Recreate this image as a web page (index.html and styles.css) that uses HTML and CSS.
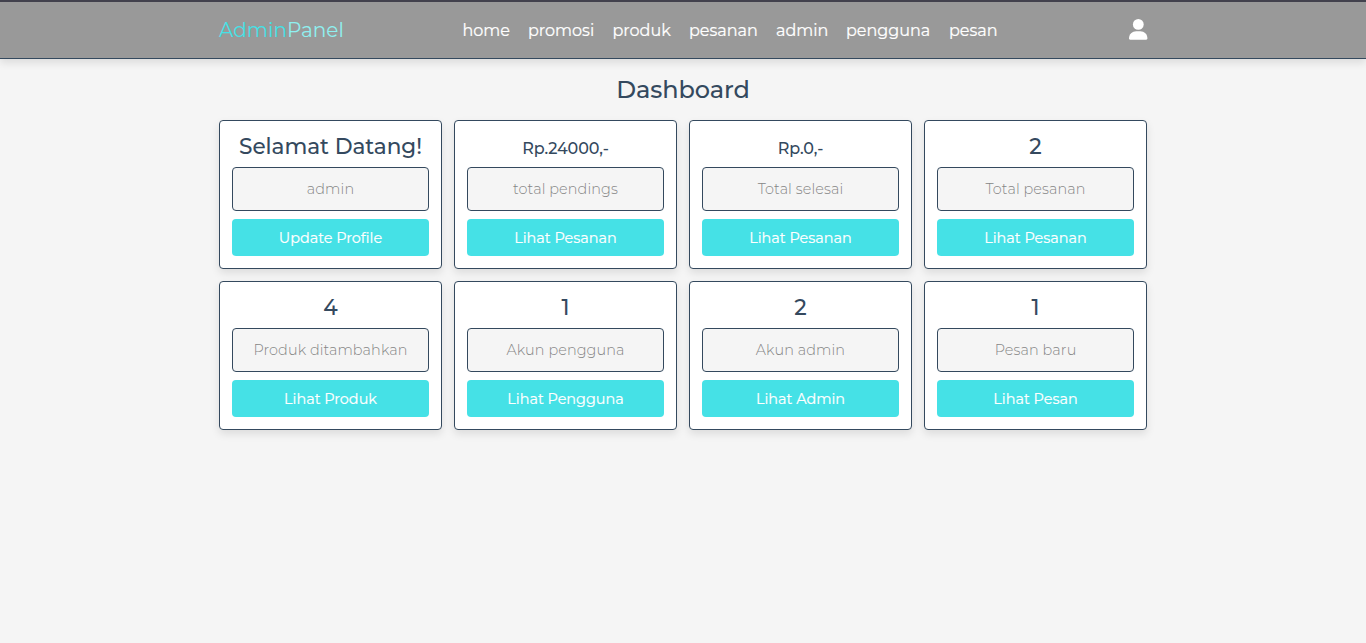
FILE: index.html
```html
<!DOCTYPE html>
<html lang="id">
<head>
<meta charset="utf-8">
<title>Dashboard</title>
<link rel="stylesheet" href="styles.css">
</head>
<body>
<header class="header">
  <div class="bar">
    <a class="logo">Admin<span>Panel</span></a>
    <nav class="navbar"><a>home</a><a>promosi</a><a>produk</a><a>pesanan</a><a>admin</a><a>pengguna</a><a>pesan</a></nav>
    <svg class="user" viewBox="0 0 18 21"><circle cx="9.3" cy="5.4" r="5.4"/><path d="M0 19.6C0 15 3.2 12.2 7.2 12.2h4.1c4 0 7.1 2.8 7.1 7.4 0 .7-.5 1.2-1.2 1.2H1.2C.5 20.800 0 20.300 0 19.600Z"/></svg>
  </div>
</header>
<main class="dashboard">
  <h1 class="heading">Dashboard</h1>
  <div class="grid">
    <section class="card"><h3>Selamat Datang!</h3><p>admin</p><a class="btn">Update Profile</a></section>
    <section class="card"><h3 class="money">Rp.24000,-</h3><p>total pendings</p><a class="btn">Lihat Pesanan</a></section>
    <section class="card"><h3 class="money">Rp.0,-</h3><p>Total selesai</p><a class="btn">Lihat Pesanan</a></section>
    <section class="card"><h3>2</h3><p>Total pesanan</p><a class="btn">Lihat Pesanan</a></section>
    <section class="card"><h3>4</h3><p>Produk ditambahkan</p><a class="btn">Lihat Produk</a></section>
    <section class="card"><h3>1</h3><p>Akun pengguna</p><a class="btn">Lihat Pengguna</a></section>
    <section class="card"><h3>2</h3><p>Akun admin</p><a class="btn">Lihat Admin</a></section>
    <section class="card"><h3>1</h3><p>Pesan baru</p><a class="btn">Lihat Pesan</a></section>
  </div>
</main>
</body>
</html>
```
FILE: styles.css
```css
* { box-sizing: border-box; margin: 0; padding: 0; }
body {
  min-height: 100vh;
  background: #f5f5f5;
  color: #34495e;
  font-family: Montserrat, Inter, sans-serif;
}
.header {
  height: 59px;
  background: #999;
  border-top: 2px solid #42414d;
  border-bottom: 1px solid #34495e;
  box-shadow: 0 4px 8px rgba(0, 0, 0, .1);
}
.bar {
  width: 928px;
  height: 56px;
  margin: 0 auto;
  display: grid;
  grid-template-columns: 243.5px 1fr 18px;
  align-items: center;
}
.logo { font-size: 20px; color: #45e1e6; }
.logo span { color: #8ff0f0; }
.navbar {
  display: grid;
  grid-template-columns: 65.500px 84.5px 76.500px 87px 70px 103px 60px;
  font-size: 16px;
  -webkit-text-stroke: .2px #fff;
  color: #fff;
}
.user { width: 18px; height: 21px; margin-bottom: 2px; fill: #fff; overflow: visible; }
.dashboard { width: 928px; margin: 0 auto; padding-top: 15px; }
.heading {
  height: 31px;
  line-height: 31px;
  font-size: 24px;
  font-weight: 500;
  letter-spacing: -.1px;
  text-align: center;
}
.grid {
  margin-top: 15px;
  display: grid;
  grid-template-columns: repeat(4, minmax(0, 1fr));
  gap: 12px;
}
.card {
  height: 149px;
  padding: 12px;
  border: 1px solid #34495e;
  border-radius: 4px;
  background: #fff;
  box-shadow: 0 4px 8px rgba(0, 0, 0, .1);
  text-align: center;
}
.card h3 {
  height: 26px;
  line-height: 26px;
  font-size: 21.600px;
  font-weight: 500;
  letter-spacing: -.05px;
  white-space: nowrap;
}
.card .money { font-size: 16px; line-height: 32px; }
.card p {
  height: 44px;
  margin: 8px 0;
  border: 1px solid #34495e;
  border-radius: 4px;
  background: #f5f5f5;
  color: #858585;
  font-size: 14.400px;
  font-weight: 300;
  letter-spacing: .1px;
  line-height: 42px;
}
.btn {
  display: block;
  height: 37px;
  border-radius: 4px;
  background: #45e1e6;
  color: #fff;
  font-size: 14.400px;
  -webkit-text-stroke: .2px #fff;
  line-height: 38px;
}
```
